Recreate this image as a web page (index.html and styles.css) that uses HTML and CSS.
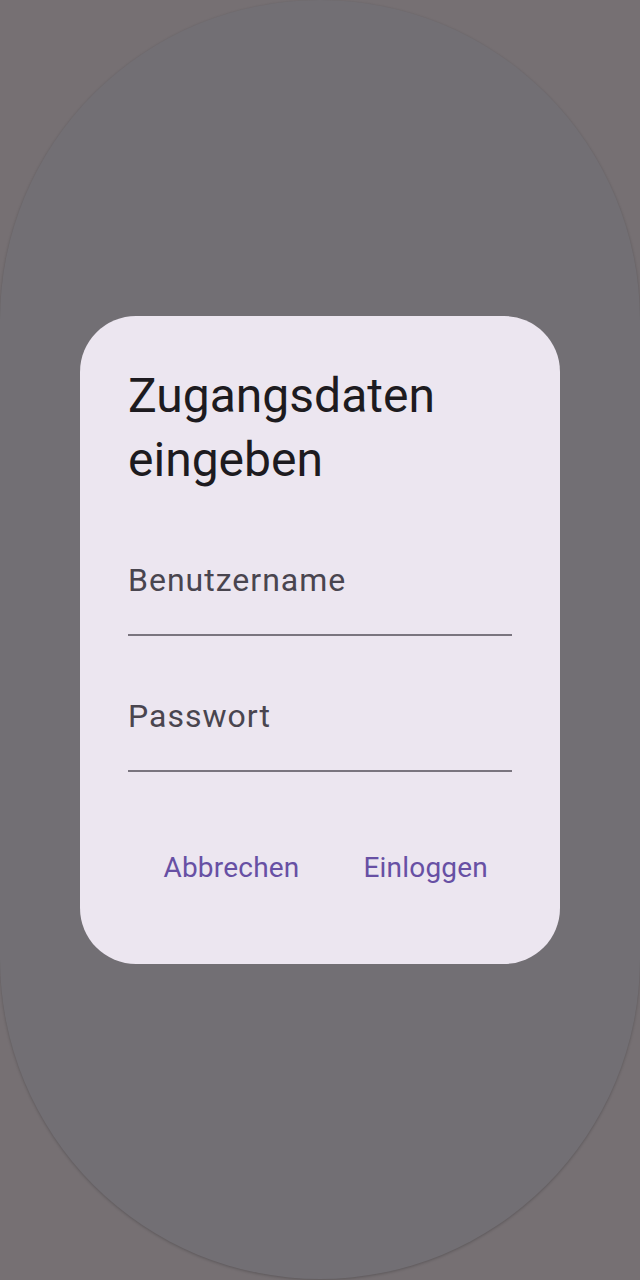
FILE: index.html
```html
<!DOCTYPE html>
<html lang="de">
<head>
<meta charset="utf-8">
<title>Zugangsdaten eingeben</title>
<link rel="stylesheet" href="styles.css">
</head>
<body>
<div class="screen">
  <div class="blob">
    <div class="dialog" role="dialog">
      <h1 class="title">Zugangsdaten eingeben</h1>
      <div class="fields">
        <label class="field">
          <span class="label">Benutzername</span>
        </label>
        <label class="field">
          <span class="label">Passwort</span>
        </label>
      </div>
      <div class="actions">
        <button class="text-btn" type="button">Abbrechen</button>
        <button class="text-btn" type="button">Einloggen</button>
      </div>
    </div>
  </div>
</div>
</body>
</html>
```
FILE: styles.css
```css
html, body {
  margin: 0;
  padding: 0;
}
body {
  font-family: Roboto, "Liberation Sans", sans-serif;
  background: #767073;
}
.screen {
  width: 640px;
  height: 1280px;
  background: #767073;
  overflow: hidden;
}
.blob {
  width: 640px;
  height: 1279px;
  border-radius: 320px;
  background: #726f74;
  box-shadow: 0 1px 3px rgba(0, 0, 0, 0.22);
  display: flex;
  align-items: center;
  justify-content: center;
}
.dialog {
  box-sizing: border-box;
  width: 480px;
  padding: 48px;
  background: #ece6f0;
  border-radius: 56px;
  display: flex;
  flex-direction: column;
}
.title {
  margin: 0 0 48px 0;
  font-size: 48px;
  line-height: 64px;
  font-weight: 400;
  color: #1d1b20;
}
.fields {
  display: flex;
  flex-direction: column;
  gap: 40px;
  margin-bottom: 48px;
}
.field {
  display: block;
  height: 96px;
  box-sizing: border-box;
  padding-top: 16px;
  border-bottom: 2px solid #7a757f;
}
.label {
  display: block;
  font-size: 32px;
  line-height: 48px;
  letter-spacing: 1px;
  color: #49454f;
}
.actions {
  display: flex;
  justify-content: flex-end;
  gap: 16px;
}
.text-btn {
  height: 96px;
  padding: 0 24px;
  border: 0;
  background: transparent;
  font-family: Roboto, "Liberation Sans", sans-serif;
  font-size: 28px;
  line-height: 40px;
  font-weight: 400;
  letter-spacing: 0.2px;
  color: #6750a4;
  cursor: pointer;
}
```
